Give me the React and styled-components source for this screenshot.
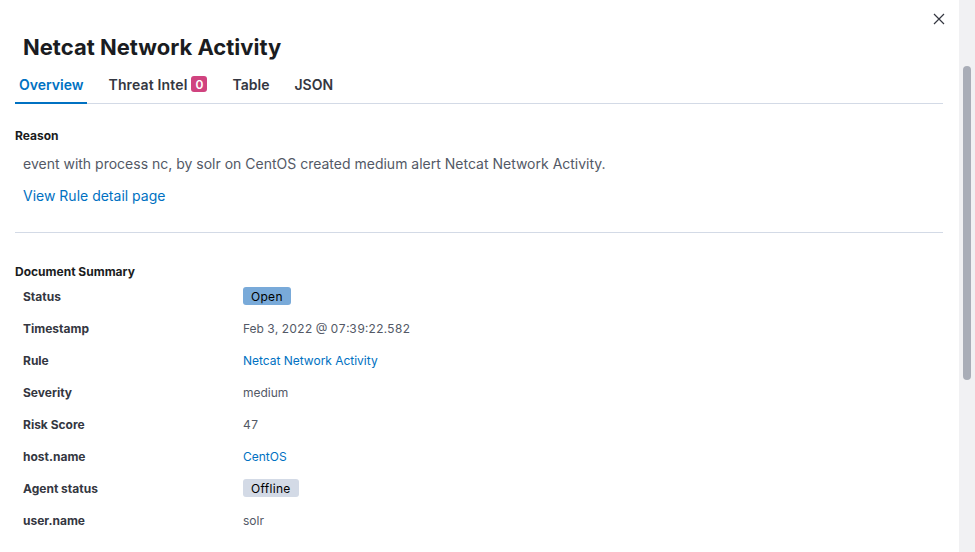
import React from "react";
import styled, { createGlobalStyle } from "styled-components";

const Global = createGlobalStyle`
  html, body { margin: 0; padding: 0; background: #fff; }
  body { font-family: Inter, "Noto Sans", sans-serif; color: #1a1c21; -webkit-font-smoothing: antialiased; }
  * { box-sizing: border-box; }
`;

const Page = styled.div`
  display: flex;
  width: 975px;
  height: 552px;
  overflow: hidden;
`;

const Flyout = styled.div`
  position: relative;
  flex: 1;
  padding: 0 16px 0 15px;
`;

const CloseButton = styled.button`
  position: absolute;
  top: 9px;
  right: 10px;
  width: 20px;
  height: 20px;
  padding: 0;
  border: 0;
  background: transparent;
  display: flex;
  align-items: center;
  justify-content: center;
  color: #343741;
`;

const Title = styled.h2`
  margin: 30px 0 0 8px;
  font-size: 22px;
  line-height: 34px;
  font-weight: 700;
  color: #1a1c21;
`;

const TabList = styled.div`
  display: flex;
  gap: 17px;
  height: 40px;
  box-shadow: inset 0 -1px 0 #d3dae6;
`;

const Tab = styled.div`
  display: flex;
  align-items: center;
  gap: 4px;
  padding: 0 4px;
  height: 40px;
  font-size: 14px;
  font-weight: 600;
  color: ${(p) => (p.$active ? "#0071c2" : "#343741")};
  box-shadow: ${(p) => (p.$active ? "inset 0 -2px 0 #0071c2" : "none")};
`;

const TabText = styled.span`
  letter-spacing: ${(p) => p.$spacing || 0}px;
`;

const Notification = styled.span`
  display: inline-flex;
  align-items: center;
  justify-content: center;
  width: 16px;
  height: 16px;
  border-radius: 3px;
  background: #d0437f;
  color: #fff;
  font-size: 12px;
  font-weight: 600;
`;

const SectionTitle = styled.div`
  margin-top: ${(p) => p.$top}px;
  font-size: 12px;
  line-height: 16px;
  font-weight: 700;
  color: #1a1c21;
`;

const Paragraph = styled.p`
  margin: 10px 0 0 8px;
  font-size: 14px;
  line-height: 20px;
  color: #535966;
`;

const Link = styled.a`
  display: block;
  margin: 12px 0 0 8px;
  font-size: 14px;
  line-height: 20px;
  color: #0071c2;
  text-decoration: none;
`;

const Divider = styled.hr`
  margin: 26px 0 0;
  border: 0;
  height: 1px;
  background: #d3dae6;
`;

const Summary = styled.div`
  display: grid;
  grid-template-columns: 220px 1fr;
  grid-auto-rows: 32px;
  padding-left: 8px;
`;

const Label = styled.div`
  display: flex;
  align-items: center;
  font-size: 12px;
  font-weight: 700;
  color: #343741;
`;

const Value = styled.div`
  display: flex;
  align-items: center;
  font-size: 12px;
  font-variant-numeric: tabular-nums;
  color: ${(p) => (p.$link ? "#0071c2" : "#535966")};
`;

const Badge = styled.span`
  display: inline-flex;
  align-items: center;
  height: 18px;
  padding: 0 8px;
  border-radius: 3px;
  font-size: 12px;
  font-weight: 400;
  letter-spacing: 0.3px;
  color: #000;
  background: ${(p) => p.$bg};
`;

const ScrollTrack = styled.div`
  width: 16px;
  flex-shrink: 0;
  background: #f1f1f3;
  padding: 66px 4px 0;
`;

const ScrollThumb = styled.div`
  height: 314px;
  border-radius: 4px;
  background: #a9adb7;
`;

const rows = [
  ["Status", <Badge $bg="#79aad9">Open</Badge>],
  ["Timestamp", "Feb 3, 2022 @ 07:39:22.582"],
  ["Rule", "Netcat Network Activity", true],
  ["Severity", "medium"],
  ["Risk Score", "47"],
  ["host.name", "CentOS", true],
  ["Agent status", <Badge $bg="#d3dae6">Offline</Badge>],
  ["user.name", "solr"],
];

export default function App() {
  return (
    <Page>
      <Global />
      <Flyout>
        <CloseButton aria-label="Close">
          <svg width="12" height="12" viewBox="0 0 12 12">
            <path d="M1 1 L11 11 M11 1 L1 11" stroke="currentColor" strokeWidth="1.2" />
          </svg>
        </CloseButton>
        <Title>Netcat Network Activity</Title>
        <TabList>
          <Tab $active>Overview</Tab>
          <Tab>
            <TabText $spacing={0.15}>Threat Intel</TabText>
            <Notification>0</Notification>
          </Tab>
          <Tab>Table</Tab>
          <Tab>JSON</Tab>
        </TabList>
        <SectionTitle $top={24}>Reason</SectionTitle>
        <Paragraph>
          event with process nc, by solr on CentOS created medium alert Netcat Network Activity.
        </Paragraph>
        <Link href="#">View Rule detail page</Link>
        <Divider />
        <SectionTitle $top={31}>Document Summary</SectionTitle>
        <Summary>
          {rows.map(([label, value, link]) => (
            <React.Fragment key={label}>
              <Label>{label}</Label>
              <Value $link={link}>{value}</Value>
            </React.Fragment>
          ))}
        </Summary>
      </Flyout>
      <ScrollTrack>
        <ScrollThumb />
      </ScrollTrack>
    </Page>
  );
}
